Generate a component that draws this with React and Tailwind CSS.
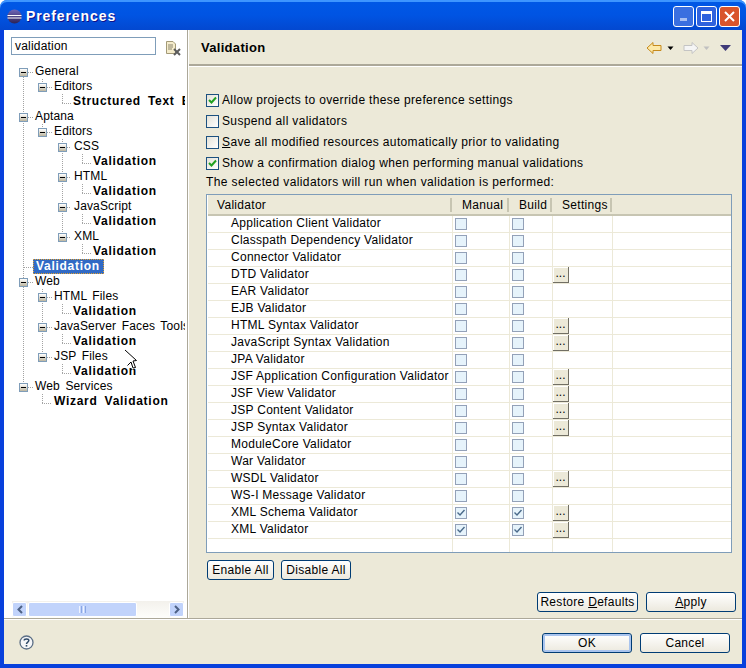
const FONT = { fontFamily: '"Liberation Sans", Arial, sans-serif' };

const treeRows = [
  ['e', 1, 'General'], ['e', 2, 'Editors'], ['b', 3, 'Structured Text Editors'],
  ['e', 1, 'Aptana'], ['e', 2, 'Editors'], ['e', 3, 'CSS'], ['b', 4, 'Validation'],
  ['e', 3, 'HTML'], ['b', 4, 'Validation'], ['e', 3, 'JavaScript'], ['b', 4, 'Validation'],
  ['e', 3, 'XML'], ['b', 4, 'Validation'], ['s', 1, 'Validation'],
  ['e', 1, 'Web'], ['e', 2, 'HTML Files'], ['b', 3, 'Validation'],
  ['e', 2, 'JavaServer Faces Tools'], ['b', 3, 'Validation'], ['e', 2, 'JSP Files'], ['b', 3, 'Validation'],
  ['e', 1, 'Web Services'], ['b', 2, 'Wizard Validation'],
];

const validators = [
  ['Application Client Validator', 0, 0],
  ['Classpath Dependency Validator', 0, 0],
  ['Connector Validator', 0, 0],
  ['DTD Validator', 0, 1],
  ['EAR Validator', 0, 0],
  ['EJB Validator', 0, 0],
  ['HTML Syntax Validator', 0, 1],
  ['JavaScript Syntax Validation', 0, 1],
  ['JPA Validator', 0, 0],
  ['JSF Application Configuration Validator', 0, 1],
  ['JSF View Validator', 0, 1],
  ['JSP Content Validator', 0, 1],
  ['JSP Syntax Validator', 0, 1],
  ['ModuleCore Validator', 0, 0],
  ['War Validator', 0, 0],
  ['WSDL Validator', 0, 1],
  ['WS-I Message Validator', 0, 0],
  ['XML Schema Validator', 1, 1],
  ['XML Validator', 1, 1],
];

function Expander() {
  return (
    <span className="flex items-center justify-center w-[9px] h-[9px] mt-[4px] border border-[#7f9db9] bg-gradient-to-b from-white to-[#bdb6a0] shrink-0">
      <span className="block w-[5px] h-px bg-black" />
    </span>
  );
}

function TreeLines() {
  const v = (x, y1, y2) => `M${x}.5 ${y1}V${y2}`;
  const h = (x1, x2, y) => `M${x1} ${y}.5H${x2}`;
  const d = [
    v(23, 77, 388), v(42, 79, 83), v(62, 94, 103), h(62, 71, 103),
    v(42, 124, 128), v(62, 139, 238),
    v(82, 154, 163), h(82, 91, 163), v(82, 184, 193), h(82, 91, 193),
    v(82, 214, 223), h(82, 91, 223), v(82, 244, 253), h(82, 91, 253),
    h(24, 33, 267),
    v(42, 289, 358), v(62, 304, 313), h(62, 71, 313), v(62, 334, 343), h(62, 71, 343), v(62, 364, 373), h(62, 71, 373),
    v(42, 394, 403), h(42, 52, 403),
    h(28, 33, 72), h(47, 52, 87), h(28, 33, 117), h(47, 52, 132), h(67, 71, 147), h(67, 71, 177), h(67, 71, 207), h(67, 71, 237),
    h(28, 33, 282), h(47, 52, 297), h(47, 52, 327), h(47, 52, 357), h(28, 33, 387),
  ].join('');
  return (
    <svg className="absolute left-[-4px] top-[-30px] pointer-events-none" width="187" height="420">
      <path d={d} stroke="#a3a3a3" strokeWidth="1" strokeDasharray="1 1" fill="none" shapeRendering="crispEdges" />
    </svg>
  );
}

function Cursor() {
  return (
    <svg className="absolute left-[115px] top-[315px] pointer-events-none" width="20" height="25" viewBox="0 0 20 25">
      <path d="M6 5L17.5 15.5L14 16L16.5 22.5L14 23L12 17L8.5 20.5" fill="none" stroke="#ffffff" strokeWidth="2.2" />
      <path d="M6 5L17.5 15.5L14 16L16.5 22.5L14 23L12 17L8.5 20.5" fill="none" stroke="#000000" strokeWidth="1" />
    </svg>
  );
}

function TreeRow({ kind, level, text }) {
  const pad = { 1: 'pl-[15px]', 2: 'pl-[34px]', 3: 'pl-[54px]', 4: 'pl-[74px]' }[level];
  const boldPad = { 2: 'pl-[50px]', 3: 'pl-[69px]', 4: 'pl-[89px]' }[level];
  if (kind === 's') {
    return (
      <div className="h-[15px] flex items-center pl-[29px]">
        <span className="h-[15px] mt-[2px] pl-[3px] pr-[4px] bg-[#316ac5] text-white font-bold leading-[14px] outline-1 outline-dotted outline-[#e0a030] -outline-offset-1 tracking-[0.72px]">{text}</span>
      </div>
    );
  }
  if (kind === 'b') {
    return (
      <div className={`h-[15px] flex items-center whitespace-nowrap font-bold tracking-[0.72px] [word-spacing:3px] ${boldPad}`}>{text}</div>
    );
  }
  return (
    <div className={`h-[15px] flex items-center whitespace-nowrap gap-[7px] tracking-[0.15px] [word-spacing:2px] ${pad}`}>
      <Expander />
      <span>{text}</span>
    </div>
  );
}

function Check({ checked }) {
  return (
    <span className="flex items-center justify-center w-[13px] h-[13px] border border-[#1c5180] bg-gradient-to-br from-[#e4e2d8] to-white shrink-0">
      {checked ? (
        <svg width="9" height="9" viewBox="0 0 9 9">
          <path d="M1 4 L3.5 6.5 L8 1.5" stroke="#21a121" strokeWidth="2" fill="none" />
        </svg>
      ) : null}
    </span>
  );
}

function TableCheck({ checked }) {
  return (
    <span className="flex items-center justify-center w-[12px] h-[12px] border border-[#93a1b8] bg-[#e6f3fb] shrink-0">
      {checked ? (
        <svg width="10" height="10" viewBox="0 0 10 10">
          <path d="M1.5 4.5 L4 7 L8.5 2" stroke="#4a6a8a" strokeWidth="1.4" fill="none" />
        </svg>
      ) : null}
    </span>
  );
}

function XpButton({ children, className = '', def = false }) {
  return (
    <button
      className={`h-[20px] flex items-center justify-center rounded-[3px] border border-[#003c74] bg-gradient-to-b from-white to-[#ece9de] text-black leading-none tracking-[0.3px] ${def ? 'shadow-[inset_0_0_0_2px_#a9c4ee]' : ''} ${className}`}
    >
      <span>{children}</span>
    </button>
  );
}

function Row({ name, on, settings }) {
  return (
    <div className="flex h-[17px] border-b border-[#ece9d8]">
      <div className="w-[245px] pl-[23px] pb-[2px] flex items-center whitespace-nowrap border-r border-[#ece9d8] tracking-[0.27px] overflow-hidden">{name}</div>
      <div className="w-[57px] flex items-center pl-[2px] border-r border-[#ece9d8]"><TableCheck checked={on} /></div>
      <div className="w-[43px] flex items-center pl-[2px] border-r border-[#ece9d8]"><TableCheck checked={on} /></div>
      <div className="w-[60px] flex items-start border-r border-[#ece9d8]">
        {settings ? (
          <span className="flex w-[16px] h-[16px] items-center justify-center bg-[#ece9d8] border-r border-b border-[#716f64] shadow-[inset_1px_1px_0_#ffffff] text-[12px] leading-none pb-[4px]">...</span>
        ) : null}
      </div>
      <div className="flex-1" />
    </div>
  );
}

function HeadCell({ w, children, cls }) {
  return (
    <div className={`flex items-center h-[14px] border-r-2 border-[#c7c5b2] tracking-[0.3px] ${w} ${cls}`}>{children}</div>
  );
}

function OptionRow({ checked, children, cls }) {
  return (
    <div className={`flex items-center gap-[3px] h-[13px] whitespace-nowrap tracking-[0.36px] ${cls}`}>
      <Check checked={checked} />
      <span className="pb-px">{children}</span>
    </div>
  );
}

function WinBtn({ cls, children }) {
  return (
    <span className={`flex items-center justify-center w-[21px] h-[21px] rounded-[3px] border border-white ${cls}`}>{children}</span>
  );
}

export default function App() {
  return (
    <div className="w-[746px] h-[668px] flex flex-col overflow-hidden text-[12px] text-black bg-white" style={FONT}>
      {/* Title bar */}
      <div className="h-[30px] shrink-0 flex items-center pt-[2px] pl-[7px] pr-[6px] rounded-t-[7px] bg-gradient-to-b from-[#0058e6] via-[#0054e3] to-[#0348d0] shadow-[inset_0_2px_0_#3d95ff]">
        <svg width="15" height="15" viewBox="0 0 15 15">
          <defs>
            <linearGradient id="eclipse" x1="0" y1="0" x2="0" y2="1">
              <stop offset="0" stopColor="#6f67b8" />
              <stop offset="1" stopColor="#2c2255" />
            </linearGradient>
          </defs>
          <circle cx="7.5" cy="7.5" r="7" fill="url(#eclipse)" />
          <path d="M0.5 6.5H14.5M0.5 9H14.5" stroke="#ffffff" strokeWidth="1" />
        </svg>
        <span className="ml-[4px] text-white font-bold text-[14px] tracking-[0.9px] [text-shadow:1px_1px_0_#0f1089]">Preferences</span>
        <div className="ml-auto flex gap-[2px]">
          <WinBtn cls="bg-[#3a6fe0] border-[#8fb0f0]">
            <span className="block w-[7px] h-[3px] mt-[7px] bg-[#a9c0f2]" />
          </WinBtn>
          <WinBtn cls="bg-[#2f62dd]">
            <span className="block w-[11px] h-[11px] border border-white border-t-[3px]" />
          </WinBtn>
          <WinBtn cls="bg-[#d9542b]">
            <svg width="13" height="13" viewBox="0 0 13 13">
              <path d="M2 2L11 11M11 2L2 11" stroke="#ffffff" strokeWidth="2" />
            </svg>
          </WinBtn>
        </div>
      </div>

      {/* Body */}
      <div className="flex-1 min-h-0 flex flex-col border-x-4 border-b-4 border-[#0840dc] bg-[#ece9d8]">
        <div className="h-[589px] flex shrink-0 border-b border-[#aca899]">
          {/* Left pane */}
          <div className="w-[183px] shrink-0 bg-white relative flex flex-col overflow-hidden">
            <div className="flex items-center h-[33px] shrink-0 pl-[7px] pb-px">
              <div className="w-[145px] h-[18px] border border-[#7f9db9] bg-white pl-[3px] flex items-center tracking-[0.2px]">validation</div>
              <svg className="ml-[9px] mt-[3px]" width="16" height="16" viewBox="0 0 16 16">
                <path d="M1.5 1.5H8L10.5 4V13.5H1.5Z" fill="#f5eccb" stroke="#a39a78" />
                <path d="M3 5H8M3 7H8M3 9H7" stroke="#8a8570" />
                <path d="M9 9L15 15M15 9L9 15" stroke="#5c5c5c" strokeWidth="2" />
              </svg>
            </div>
            <TreeLines />
            <div className="relative flex-1 min-h-0 mr-[2px] overflow-hidden">
              {treeRows.map((r, i) => (
                <TreeRow key={i} kind={r[0]} level={r[1]} text={r[2]} />
              ))}
            </div>
            <Cursor />
            {/* Scrollbar */}
            <div className="h-[17px] shrink-0 ml-[8px] mr-[3px] flex bg-gradient-to-b from-[#f3f1ec] to-[#fefefb]">
              <span className="w-[15px] h-[15px] mt-px rounded-[2px] bg-[#c1d3fb] border border-white flex items-center justify-center">
                <svg width="8" height="9" viewBox="0 0 8 9"><path d="M6 1L2.5 4.5L6 8" stroke="#4d6185" strokeWidth="2" fill="none" /></svg>
              </span>
              <span className="w-[109px] h-[15px] mt-px ml-px rounded-[2px] bg-[#c1d3fb] border border-white flex items-center justify-center gap-px">
                <span className="w-px h-[7px] bg-[#eef3ff]" /><span className="w-px h-[7px] bg-[#8aa6e4]" /><span className="w-px h-[7px] bg-[#eef3ff]" /><span className="w-px h-[7px] bg-[#8aa6e4]" />
              </span>
              <span className="flex-1" />
              <span className="w-[15px] h-[15px] mt-px rounded-[2px] bg-[#c1d3fb] border border-white flex items-center justify-center">
                <svg width="8" height="9" viewBox="0 0 8 9"><path d="M2 1L5.5 4.5L2 8" stroke="#4d6185" strokeWidth="2" fill="none" /></svg>
              </span>
            </div>
          </div>

          {/* Sash */}
          <div className="w-[2px] shrink-0 bg-[#aca899] border-r border-white" />

          {/* Right pane */}
          <div className="flex-1 min-w-0 flex flex-col">
            <div className="h-[36px] shrink-0 flex items-center pt-[2px] pl-[12px] pr-[11px] border-b-2 border-b-[#aca899] shadow-[0_1px_0_#ffffff]">
              <span className="font-bold text-[13px] tracking-[0.3px]">Validation</span>
              <div className="ml-auto flex items-center">
                <svg width="16" height="14" viewBox="0 0 16 14"><path d="M1 7L7 1.5V4.5H15V9.5H7V12.5Z" fill="#fde9a8" stroke="#c68a1c" /></svg>
                <svg className="ml-[5px]" width="7" height="5" viewBox="0 0 7 5"><path d="M0.5 0.5H6.5L3.5 4Z" fill="#000" /></svg>
                <svg className="ml-[9px]" width="16" height="14" viewBox="0 0 16 14"><path d="M15 7L9 1.5V4.5H1V9.5H9V12.5Z" fill="#f5f5f5" stroke="#c4c4c4" /></svg>
                <svg className="ml-[4px]" width="7" height="5" viewBox="0 0 7 5"><path d="M0.5 0.5H6.5L3.5 4Z" fill="#c0c0c0" /></svg>
                <svg className="ml-[10px]" width="11" height="6" viewBox="0 0 11 6"><path d="M0 0H11L5.5 6Z" fill="#3f3a78" /></svg>
              </div>
            </div>

            <div className="flex-1 min-h-0 flex flex-col pl-[17px] pr-[10px]">
              <OptionRow checked cls="mt-[28px]">Allow projects to override these preference settings</OptionRow>
              <OptionRow cls="mt-[8px]">Suspend all validators</OptionRow>
              <OptionRow cls="mt-[8px]"><u>S</u>ave all modified resources automatically prior to validating</OptionRow>
              <OptionRow checked cls="mt-[8px]">Show a confirmation dialog when performing manual validations</OptionRow>
              <div className="mt-[5px] h-[14px] leading-[14px] whitespace-nowrap tracking-[0.4px]">The selected validators will run when validation is performed:</div>

              {/* Table */}
              <div className="mt-[5px] h-[359px] border border-[#7f9db9] bg-white flex flex-col overflow-hidden">
                <div className="h-[21px] shrink-0 flex items-center bg-[#ece9d8] border-b-2 border-[#c7c5b2] ml-px">
                  <HeadCell w="w-[244px]" cls="pl-[9px]">Validator</HeadCell>
                  <HeadCell w="w-[57px]" cls="pl-[10px]">Manual</HeadCell>
                  <HeadCell w="w-[43px]" cls="pl-[10px]">Build</HeadCell>
                  <HeadCell w="w-[60px]" cls="pl-[10px]">Settings</HeadCell>
                </div>
                <div className="flex-1 min-h-0 flex flex-col ml-px">
                  {validators.map((v) => (
                    <Row key={v[0]} name={v[0]} on={v[1]} settings={v[2]} />
                  ))}
                  <div className="flex-1 flex">
                    <div className="w-[245px] border-r border-[#ece9d8]" />
                    <div className="w-[57px] border-r border-[#ece9d8]" />
                    <div className="w-[43px] border-r border-[#ece9d8]" />
                    <div className="w-[60px] border-r border-[#ece9d8]" />
                  </div>
                </div>
              </div>

              <div className="mt-[7px] flex gap-[7px] pl-px">
                <XpButton className="w-[67px]">Enable All</XpButton>
                <XpButton className="w-[70px]">Disable All</XpButton>
              </div>

              <div className="mt-[12px] flex justify-end gap-[8px] -mr-[4px]">
                <XpButton className="w-[101px]">Restore <u>D</u>efaults</XpButton>
                <XpButton className="w-[90px]"><u>A</u>pply</XpButton>
              </div>
            </div>
          </div>
        </div>

        {/* Footer */}
        <div className="flex-1 min-h-0 border-t border-white flex items-center pt-px pl-[15px] pr-[12px]">
          <svg width="15" height="15" viewBox="0 0 15 15">
            <circle cx="7.5" cy="7.5" r="6.5" fill="#f5f6f8" stroke="#5c6f86" strokeWidth="1.3" />
            <path d="M5.2 5.6C5.2 3.4 9.8 3.4 9.8 5.6C9.8 7.2 7.5 7 7.5 9" stroke="#2f4a68" strokeWidth="1.5" fill="none" />
            <rect x="6.7" y="10" width="1.6" height="1.6" fill="#2f4a68" />
          </svg>
          <div className="ml-auto flex gap-[8px]">
            <XpButton def className="w-[90px]">OK</XpButton>
            <XpButton className="w-[90px]">Cancel</XpButton>
          </div>
        </div>
      </div>
    </div>
  );
}
